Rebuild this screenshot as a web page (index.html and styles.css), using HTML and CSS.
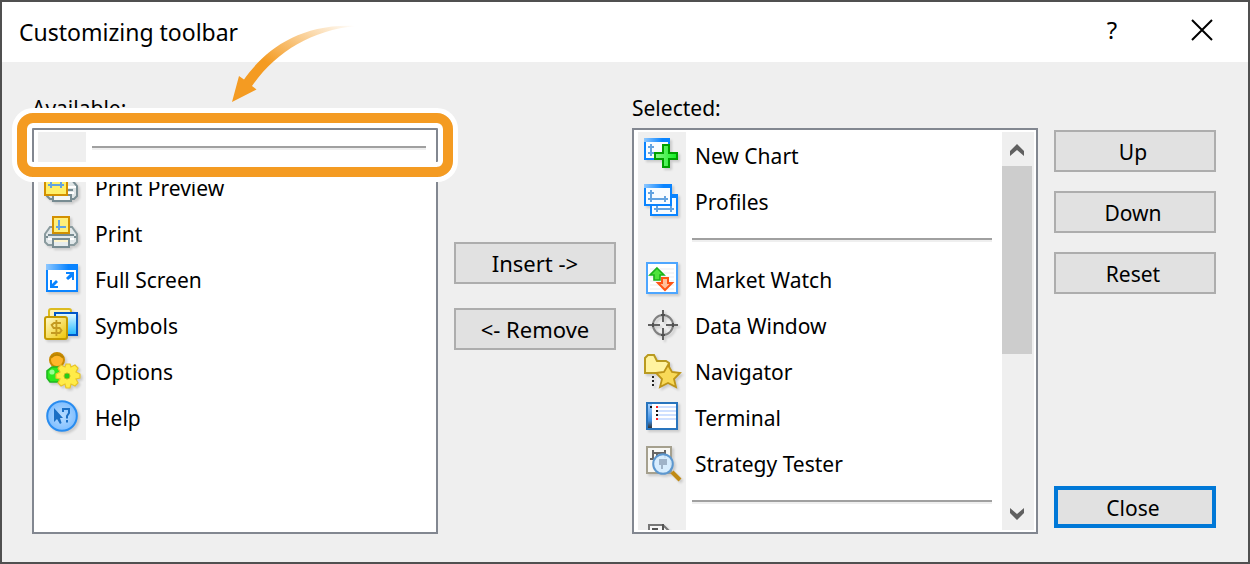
FILE: index.html
```html
<!DOCTYPE html>
<html lang="en">
<head>
<meta charset="utf-8">
<title>Customizing toolbar</title>
<link rel="stylesheet" href="styles.css">
</head>
<body>
<main class="dialog">
  <header class="titlebar">
    <h1 class="title">Customizing toolbar</h1>
    <button class="title-button help" type="button">?</button>
    <button class="title-button" type="button" aria-label="Close window">
      <svg width="22" height="22" viewBox="0 0 22 22"><path d="M1 1L21 21M21 1L1 21" stroke="#000" stroke-width="2" fill="none"/></svg>
    </button>
  </header>
  <div class="content">
    <section class="panel">
      <h2 class="label" id="available">Available:</h2>
      <div class="frame">
        <ul class="list" aria-labelledby="available">
          <li class="separator"></li>
          <li class="item"><span class="cell"><svg class="icon" viewBox="0 0 18 18">
            <path d="M9 5h5l2.500 3v5l-1.500 1.500H3L1.500 13V6z" fill="#dfe5e6" stroke="#788c92"/><path d="M12 8.500h4M12 11.500h3" stroke="#fff"/><path d="M12 10h2.500" stroke="#788c92"/>
            <rect x="4.500" y="12.500" width="9" height="3" fill="#f4f6f4" stroke="#788c92"/>
            <rect x=".5" y="1.500" width="11" height="11" fill="#ffef68" stroke="#d39000"/><path d="M2 7.500h8M3.500 6v3M8.500 6v3" stroke="#63a3e0"/></svg></span><span class="text">Print Preview</span></li>
          <li class="item"><span class="cell"><svg class="icon" viewBox="0 0 18 18">
            <path d="M3 5.500h11l2.500 3.500v4L15 14.500H2L.5 13V9z" fill="#e2e8ea" stroke="#8a9b9f"/>
            <path d="M2 9.500h13M1 10.500h1M15 10.500h1" stroke="#788c92"/><path d="M2 11.500h13" stroke="#fff"/>
            <rect x="4.500" y="11.500" width="8" height="4" fill="#e6ecee" stroke="#788c92"/><path d="M5 12.500h7" stroke="#fff5cc"/>
            <rect x="4.500" y=".5" width="8" height="8" fill="#fff07a" stroke="#d39000"/><path d="M7.500 2v5M6 5.500h5" stroke="#63a3e0"/></svg></span><span class="text">Print</span></li>
          <li class="item"><span class="cell"><svg class="icon" viewBox="0 0 18 18">
            <rect x="1.500" y="1.500" width="15" height="13" fill="#fff" stroke="#0a84ff"/><path d="M1 1h16v3H1z" fill="url(#bar)"/>
            <path d="M11 5h4v4h-1V7.500L12 9l-1-1 2-2h-2zM3 13V9h1v2l2-2 1 1-2 2h2v1z" fill="#0a84ff"/></svg></span><span class="text">Full Screen</span></li>
          <li class="item"><span class="cell"><svg class="icon" viewBox="0 0 18 18">
            <rect x="2.500" y=".5" width="11" height="10" rx="1" fill="#fff3b5" stroke="#dcbb20"/>
            <rect x="5.500" y="2.500" width="11" height="11" fill="url(#sky)" stroke="#0057c8"/>
            <rect x=".5" y="4.500" width="11" height="11" rx="1" fill="url(#gold)" stroke="#c49a00"/>
            <path d="M8.500 7.500H5L3.800 8.500l1 1.500h3l1 1.200-1 1.300H3.500M6.200 6v8" stroke="#c49a20" stroke-width=".9" fill="none"/></svg></span><span class="text">Symbols</span></li>
          <li class="item"><span class="cell"><svg class="icon" viewBox="0 0 18 18">
            <circle cx="6.500" cy="3" r="3.500" fill="#ffb62a" stroke="#c98a00"/><path d="M3.500 1.800Q6.500-1 9.500 1.800" stroke="#b88400" fill="none"/>
            <path d="M4 6.500h3l2 2.500v4l-2 1H3l-1.500-2V8.500z" fill="#2de81e" stroke="#20b820" stroke-width=".8"/><circle cx="4" cy="9" r="1.300" fill="#9aff92"/>
            <path d="M11 5h2l.5 1.500 2-1L17 7l-1 2 2 1v2l-2 .5 1 2-1.500 1.500-2-1L13 17h-2l-.5-2-2 1L7 14.500l1-2L6 12v-2l2-1-1-2 1.500-1.500 2 1z" fill="#ffec48" stroke="#e8c428" stroke-width=".6"/>
            <circle cx="11.500" cy="11" r="1.500" fill="#28cc18" stroke="#b7bc20" stroke-width=".5"/></svg></span><span class="text">Options</span></li>
          <li class="item"><span class="cell"><svg class="icon" viewBox="0 0 18 18">
            <circle cx="9" cy="8" r="7.400" fill="url(#orb)" stroke="#288cf0"/>
            <path d="M5 4v7l1.500-1.500L8 12l.8-.5L8 9h1.500z" fill="#1a6fc5"/><path d="M9.500 6V4.500h3v2L11.500 8v1.300M11.500 10v1.200" stroke="#1a6fc5" fill="none"/></svg></span><span class="text">Help</span></li>
        </ul>
        <div class="highlight"></div>
        <svg class="arrow" width="126" height="80" viewBox="0 0 126 80">
          <path d="M0 78L7 52L12 55.500C32 27 67-1 124 2C79 6 43 29 20 62L24.500 65.500Z" fill="url(#fade)"/>
        </svg>
      </div>
    </section>
    <div class="transfer">
      <button class="button" type="button">Insert -&gt;</button>
      <button class="button" type="button">&lt;- Remove</button>
    </div>
    <section class="panel">
      <h2 class="label" id="selected">Selected:</h2>
      <div class="frame">
        <ul class="list" aria-labelledby="selected">
          <li class="item"><span class="cell"><svg class="icon" viewBox="0 0 18 18">
            <rect x=".5" y=".5" width="12" height="10" fill="#f8fcff" stroke="#0a84ff"/><path d="M0 0h13v2H0z" fill="url(#bar)"/>
            <path d="M3.500 3v6M2 4.500h3M2 7.500h3" stroke="#63a3e0" fill="none"/>
            <path d="M9.500 3.500h3v4h4v3h-4v4h-3v-4h-4v-3h4z" fill="url(#green)" stroke="#00a000"/></svg></span><span class="text">New Chart</span></li>
          <li class="item"><span class="cell"><svg class="icon" viewBox="0 0 18 18">
            <rect x="3.500" y="5.500" width="13" height="10" fill="#f8fcff" stroke="#0a84ff"/><path d="M14 5h3v2h-3z" fill="#0a84ff"/><path d="M5 12.500h10M6.500 11v3M13.500 11v3" stroke="#63a3e0"/>
            <rect x=".5" y=".5" width="13" height="10" fill="#f8fcff" stroke="#0a84ff"/><path d="M0 0h14v2H0z" fill="url(#bar)"/>
            <path d="M3.500 3v6M2 4.500h3M2 7.500h10M10.500 6v3" stroke="#63a3e0"/></svg></span><span class="text">Profiles</span></li>
          <li class="separator"></li>
          <li class="item"><span class="cell"><svg class="icon" viewBox="0 0 18 18">
            <rect x="1.500" y=".5" width="15" height="15" fill="#fff" stroke="#4da6ff"/><path d="M3 3.500h12M3 5.500h12M3 7.500h12M3 9.500h12M3 11.500h12M3 13.500h12" stroke="#e9ecef" stroke-width=".6"/>
            <path d="M6.500 3L10 6.500H8V9H5V6.500H3z" fill="#4ee33c" stroke="#19b11a" stroke-width=".8"/>
            <path d="M10.500 14L14 10.500h-2V8H9v2.500H7z" fill="#ffc19c" stroke="#ff5514" stroke-width="1"/></svg></span><span class="text">Market Watch</span></li>
          <li class="item"><span class="cell"><svg class="icon" viewBox="0 0 18 18">
            <circle cx="9.500" cy="8.500" r="5" fill="none" stroke="#808080"/><path d="M2 8.500h6M11 8.500h6M9.500 1v6M9.500 10v6" stroke="#606060"/><path d="M4.500 7.500v2M14.500 7.500v2M8.500 3.500h2M8.500 13.500h2" stroke="#505050"/></svg></span><span class="text">Data Window</span></li>
          <li class="item"><span class="cell"><svg class="icon" viewBox="0 0 18 18">
            <path d="M.5 9.500V2L2 .5h3L6.500 3.500H11l1.500 1v5z" fill="#fff3a0" stroke="#b99a20"/>
            <path d="M4.500 11v1M4.500 13v1M4.500 15v1" stroke="#222"/>
            <path d="M12 5.500l2 3.500 4 .5-3 3 1 4-4-2-4 2 1-4-3-3 4-.5z" fill="#f8d958" stroke="#bd9418" stroke-width=".9"/></svg></span><span class="text">Navigator</span></li>
          <li class="item"><span class="cell"><svg class="icon" viewBox="0 0 18 18">
            <rect x="1.500" y="1.500" width="15" height="13" fill="#fff" stroke="#2874bd"/><path d="M2 2h2v12H2z" fill="url(#side)"/>
            <path d="M7 3.500h9M7 5.500h9M7 7.500h9M7 9.500h9" stroke="#cfe0ff"/><path d="M6 3.500h1M6 9.500h1" stroke="#ff2020"/><path d="M3 3.500h1M6 5.500h1M6 7.500h1" stroke="#111"/></svg></span><span class="text">Terminal</span></li>
          <li class="item"><span class="cell"><svg class="icon" viewBox="0 0 18 18">
            <rect x="1.500" y=".5" width="12" height="13" fill="#f7f7f3" stroke="#a5a08e"/><path d="M4.500 2v5M3 6.500h2M6.500 3v2M5 3.500h6M10.500 2v4" stroke="#666"/>
            <path d="M14 13l4 4" stroke="#c08a14" stroke-width="2"/><circle cx="9.500" cy="9" r="4.900" fill="#d4ebff" fill-opacity=".92" stroke="#5c97cf"/><path d="M7.500 6.500h4v3h-2v2h-1v-2h-1z" fill="#9fb3c8"/></svg></span><span class="text">Strategy Tester</span></li>
          <li class="separator"></li>
          <li class="item"><span class="cell"><svg class="icon" viewBox="0 0 18 18">
            <path d="M2.500 15V.5h7l3 3V15z" fill="#f7f7f7" stroke="#777"/><path d="M9.500 0v3.500h3M4 2.500h3" stroke="#555" fill="none"/></svg></span><span class="text"></span></li>
        </ul>
        <div class="scrollbar">
          <button class="scroll-button" type="button" aria-label="Scroll up"><svg width="14" height="12" viewBox="0 0 14 12"><path d="M0 7L7 0L14 7V12L7 6L0 12Z" fill="#606060"/></svg></button>
          <div class="track"><div class="thumb"></div></div>
          <button class="scroll-button" type="button" aria-label="Scroll down"><svg width="14" height="12" viewBox="0 0 14 12"><path d="M0 5L7 12L14 5V0L7 6L0 0Z" fill="#606060"/></svg></button>
        </div>
      </div>
    </section>
    <div class="actions">
      <button class="button" type="button">Up</button>
      <button class="button" type="button">Down</button>
      <button class="button" type="button">Reset</button>
      <button class="button primary" type="button">Close</button>
    </div>
  </div>
</main>
<svg class="defs" width="0" height="0" aria-hidden="true">
  <defs>
    <linearGradient id="bar"><stop stop-color="#8ec8ff"/><stop offset=".7" stop-color="#0a84ff"/></linearGradient>
    <linearGradient id="sky" x2="0" y2="1"><stop stop-color="#e8fbff"/><stop offset="1" stop-color="#20b8ff"/></linearGradient>
    <linearGradient id="gold" x2="1" y2="1"><stop stop-color="#fffbd0"/><stop offset="1" stop-color="#eec400"/></linearGradient>
    <linearGradient id="green"><stop stop-color="#8cf58c"/><stop offset="1" stop-color="#10f020"/></linearGradient>
    <linearGradient id="side" x2="0" y2="1"><stop stop-color="#a8d2ff"/><stop offset=".7" stop-color="#3d8ee0"/><stop offset="1" stop-color="#333"/></linearGradient>
    <radialGradient id="orb"><stop stop-color="#b8dcff"/><stop offset="1" stop-color="#7fbeff"/></radialGradient>
    <linearGradient id="fade" x1="0" y1="1" x2="1" y2="0"><stop offset=".4" stop-color="#f49b22"/><stop offset="1" stop-color="#f49b22" stop-opacity="0"/></linearGradient>
  </defs>
</svg>
</body>
</html>
```
FILE: styles.css
```css
*,
*::before,
*::after { box-sizing: border-box; }

body {
  margin: 0;
  font: 21px/28px "Noto Sans", sans-serif;
  color: #000;
}

.dialog {
  display: flex;
  flex-direction: column;
  height: 100vh;
  border: 2px solid #505050;
  background: #efefef;
}

.titlebar {
  display: flex;
  align-items: center;
  height: 60px;
  padding: 0 34px 0 17px;
  background: #fff;
}

.title {
  flex: 1;
  margin: 0;
  font: 23px/32px "Noto Sans", sans-serif;
}

.title-button {
  display: flex;
  align-items: center;
  justify-content: center;
  width: 24px;
  height: 32px;
  margin: 0 0 4px 66px;
  padding: 0;
  border: 0;
  background: none;
  color: #000;
}

.help { font: 24px/32px "Noto Sans", sans-serif; }

.content {
  display: grid;
  flex: 1;
  grid-template-columns: 1fr 162px 1fr 162px;
  gap: 16px;
  min-height: 0;
  padding: 32px 32px 28px 30px;
}

.panel {
  display: flex;
  flex-direction: column;
  gap: 6px;
  min-height: 0;
}

.label {
  margin: 0;
  font-size: 21px;
  font-weight: 400;
  line-height: 28px;
}

.frame {
  position: relative;
  display: flex;
  flex: 1;
  min-height: 0;
  padding: 2px 2px 2px 4px;
  border: 2px solid #828790;
  background: #fff;
}

.list {
  flex: 1;
  margin: 0;
  padding: 0;
  overflow: hidden;
  list-style: none;
}

.item {
  display: flex;
  height: 46px;
}

.cell {
  width: 48px;
  padding: 6px;
  background: #efefef;
}

.icon {
  display: block;
  width: 36px;
  height: 36px;
  overflow: visible;
  filter: drop-shadow(2px 2px 1px rgba(0, 0, 0, 0.15));
}

.text {
  padding-left: 9px;
  line-height: 48px;
  white-space: nowrap;
}

.separator {
  display: flex;
  height: 32px;
}

.separator::before {
  width: 48px;
  background: #efefef;
  content: "";
}

.separator::after {
  flex: 1;
  height: 4px;
  margin: 14px 8px 0 6px;
  border-top: 2px solid #a0a0a0;
  background: #efefef;
  content: "";
}

.scrollbar {
  display: flex;
  flex-direction: column;
  width: 32px;
  margin-left: 2px;
  background: #efefef;
}

.scroll-button {
  height: 34px;
  padding: 2px 2px 0 0;
  border: 0;
  background: none;
}

.scroll-button svg {
  display: block;
  margin: 0 auto;
}

.track { flex: 1; }

.thumb {
  width: 30px;
  height: 57%;
  background: #cdcdcd;
}

.highlight {
  position: absolute;
  top: -17px;
  right: -17px;
  left: -17px;
  height: 64px;
  border: 10px solid #f49b22;
  border-radius: 16px;
  box-shadow: 0 0 0 5px #fff, inset 0 0 0 5px #fff;
}

.arrow {
  position: absolute;
  top: -106px;
  left: 198px;
}

.transfer {
  display: flex;
  flex-direction: column;
  gap: 24px;
  padding-top: 148px;
}

.actions {
  display: flex;
  flex-direction: column;
  gap: 19px;
  padding: 36px 0 6px;
}

.button {
  height: 42px;
  padding: 2px 4px 0 0;
  border: 2px solid #adadad;
  background: #e1e1e1;
  color: #000;
  font: 21px/28px "Noto Sans", sans-serif;
}

.transfer .button {
  padding: 0;
  font-size: 22px;
}

.primary {
  margin-top: auto;
  border: 4px solid #0078d7;
}

.defs { position: absolute; }
```
